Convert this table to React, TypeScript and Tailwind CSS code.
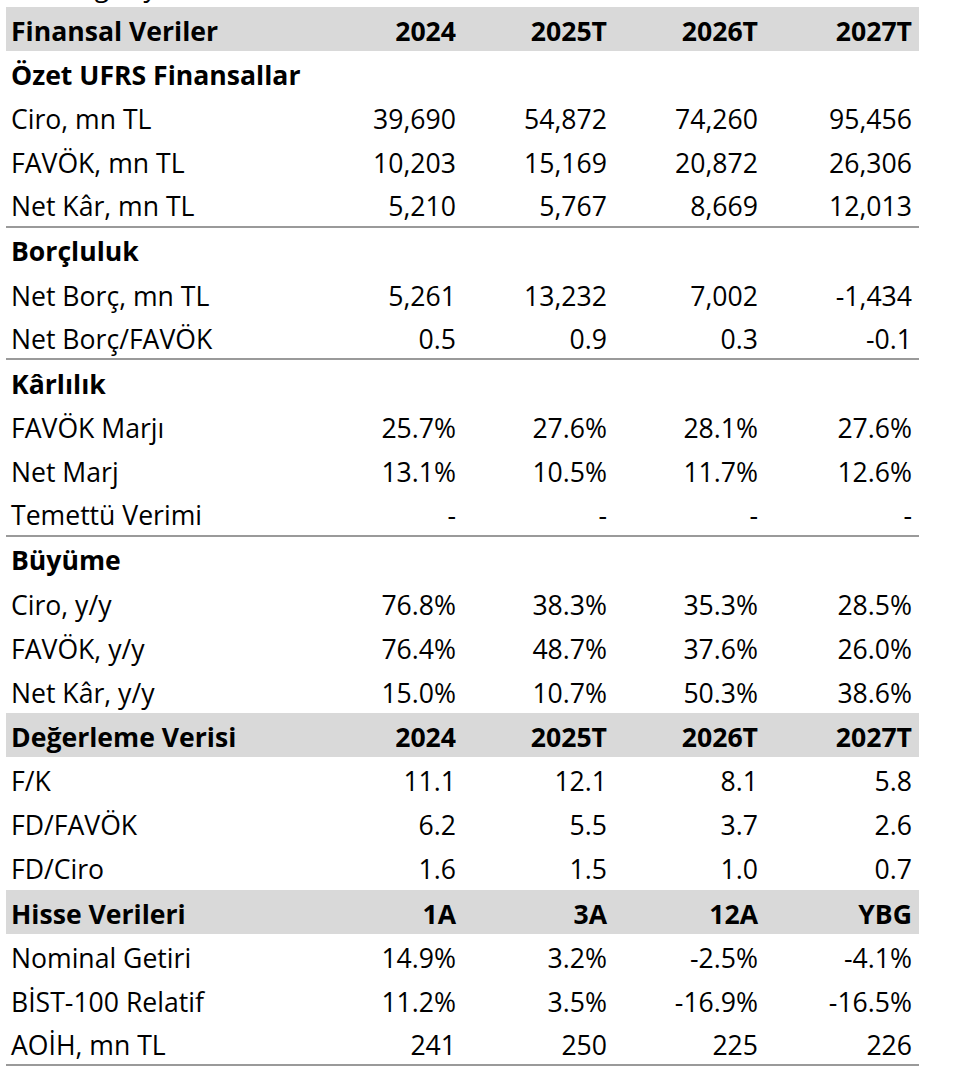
import React from 'react'

type Row =
  | { kind: 'head'; label: string; cols: string[] }
  | { kind: 'section'; label: string }
  | { kind: 'data'; label: string; cols: string[]; line?: boolean }

const ROWS: Row[] = [
  { kind: 'head', label: 'Finansal Veriler', cols: ['2024', '2025T', '2026T', '2027T'] },
  { kind: 'section', label: 'Özet UFRS Finansallar' },
  { kind: 'data', label: 'Ciro, mn TL', cols: ['39,690', '54,872', '74,260', '95,456'] },
  { kind: 'data', label: 'FAVÖK, mn TL', cols: ['10,203', '15,169', '20,872', '26,306'] },
  { kind: 'data', label: 'Net Kâr, mn TL', cols: ['5,210', '5,767', '8,669', '12,013'], line: true },
  { kind: 'section', label: 'Borçluluk' },
  { kind: 'data', label: 'Net Borç, mn TL', cols: ['5,261', '13,232', '7,002', '-1,434'] },
  { kind: 'data', label: 'Net Borç/FAVÖK', cols: ['0.5', '0.9', '0.3', '-0.1'], line: true },
  { kind: 'section', label: 'Kârlılık' },
  { kind: 'data', label: 'FAVÖK Marjı', cols: ['25.7%', '27.6%', '28.1%', '27.6%'] },
  { kind: 'data', label: 'Net Marj', cols: ['13.1%', '10.5%', '11.7%', '12.6%'] },
  { kind: 'data', label: 'Temettü Verimi', cols: ['-', '-', '-', '-'], line: true },
  { kind: 'section', label: 'Büyüme' },
  { kind: 'data', label: 'Ciro, y/y', cols: ['76.8%', '38.3%', '35.3%', '28.5%'] },
  { kind: 'data', label: 'FAVÖK, y/y', cols: ['76.4%', '48.7%', '37.6%', '26.0%'] },
  { kind: 'data', label: 'Net Kâr, y/y', cols: ['15.0%', '10.7%', '50.3%', '38.6%'] },
  { kind: 'head', label: 'Değerleme Verisi', cols: ['2024', '2025T', '2026T', '2027T'] },
  { kind: 'data', label: 'F/K', cols: ['11.1', '12.1', '8.1', '5.8'] },
  { kind: 'data', label: 'FD/FAVÖK', cols: ['6.2', '5.5', '3.7', '2.6'] },
  { kind: 'data', label: 'FD/Ciro', cols: ['1.6', '1.5', '1.0', '0.7'] },
  { kind: 'head', label: 'Hisse Verileri', cols: ['1A', '3A', '12A', 'YBG'] },
  { kind: 'data', label: 'Nominal Getiri', cols: ['14.9%', '3.2%', '-2.5%', '-4.1%'] },
  { kind: 'data', label: 'BİST-100 Relatif', cols: ['11.2%', '3.5%', '-16.9%', '-16.5%'] },
  { kind: 'data', label: 'AOİH, mn TL', cols: ['241', '250', '225', '226'], line: true },
]

const rowCls = 'grid h-[44.15px] grid-cols-[1fr_151px_151px_151px_151px] items-center pt-[4px]'
const numCls = 'pr-[10px] text-right last:pr-[7px]'

export default function App() {
  return (
    <div className="min-h-[1067px] w-[960px] overflow-hidden bg-white text-black [font-family:'Open_Sans',sans-serif] text-[26.6px] leading-none">
      {/* cropped line from the page above: only descenders peek in */}
      <div className="h-[7px] overflow-hidden">
        <div className="-mt-[29px] pl-[60px] leading-[30px] whitespace-pre">
          {'     g     y                                                      ,'}
        </div>
      </div>

      <div className="ml-[6px] w-[913px]">
        {ROWS.map((r, i) => {
          if (r.kind === 'head') {
            return (
              <div key={i} className={`${rowCls} bg-[#d9d9d9] font-bold`}>
                <div className="pl-[5px]">{r.label}</div>
                {r.cols.map((c, j) => (
                  <div key={j} className={numCls}>
                    {c}
                  </div>
                ))}
              </div>
            )
          }
          if (r.kind === 'section') {
            return (
              <div key={i} className={`${rowCls} font-bold`}>
                <div className="pl-[5px]">{r.label}</div>
              </div>
            )
          }
          return (
            <div key={i} className={`${rowCls} ${r.line ? 'border-b-2 border-[#9a9a9a]' : ''}`}>
              <div className="pl-[5px]">{r.label}</div>
              {r.cols.map((c, j) => (
                <div key={j} className={numCls}>
                  {c}
                </div>
              ))}
            </div>
          )
        })}
      </div>
    </div>
  )
}
